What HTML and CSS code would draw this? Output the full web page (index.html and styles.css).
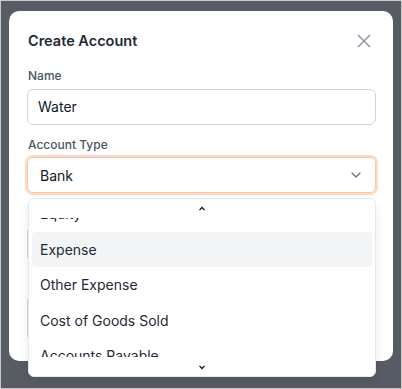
FILE: index.html
```html
<!DOCTYPE html>
<html lang="en">
<head>
  <meta charset="UTF-8">
  <meta name="viewport" content="width=device-width, initial-scale=1.0">
  <title>Create Account</title>
  <link rel="stylesheet" href="styles.css">
</head>
<body>

  <!-- Backdrop -->
  <div class="backdrop">

    <!-- Dialog -->
    <div class="modal">
      <div class="modal-header">
        <h2>Create Account</h2>
        <svg class="close-icon" width="14" height="14" viewBox="0 0 14 14">
          <path d="M1 1 13 13M13 1 1 13" />
        </svg>
      </div>

      <div class="field">
        <label>Name</label>
        <div class="text-input">Water</div>
      </div>

      <div class="field select-field">
        <label>Account Type</label>
        <div class="select open">
          <span>Bank</span>
          <svg class="select-chevron" width="16" height="16" viewBox="0 0 24 24">
            <path d="m6 9 6 6 6-6" />
          </svg>
        </div>

        <!-- Dropdown list -->
        <div class="dropdown">
          <div class="scroll-btn">
            <svg width="12" height="12" viewBox="0 0 24 24"><path d="m7 14 5-5 5 5" /></svg>
          </div>
          <div class="viewport">
            <ul class="options">
              <li>Equity</li>
              <li class="active">Expense</li>
              <li>Other Expense</li>
              <li>Cost of Goods Sold</li>
              <li>Accounts Payable</li>
            </ul>
          </div>
          <div class="scroll-btn">
            <svg width="12" height="12" viewBox="0 0 24 24"><path d="m7 10 5 5 5-5" /></svg>
          </div>
        </div>
      </div>

      <!-- Fields hidden under the open list -->
      <div class="field">
        <span class="label-space"></span>
        <div class="text-input"></div>
      </div>

      <div class="field">
        <span class="label-space"></span>
        <div class="text-input textarea"></div>
      </div>
    </div>

  </div>

</body>
</html>
```

FILE: styles.css
```css
/* General styling */
* {
  box-sizing: border-box;
}

html, body {
  margin: 0;
  height: 100%;
}

body {
  border: 1px solid #c9c9c9;
  font-family: Inter, "Noto Sans", sans-serif;
  color: #111827;
}

/* Backdrop */
.backdrop {
  height: 100%;
  background: #575b63;
  padding-top: 10px;
}

/* Dialog */
.modal {
  width: 384px;
  margin: 0 auto;
  padding: 20px 17px 20px 18px;
  background: #fff;
  border-radius: 10px;
  display: flex;
  flex-direction: column;
  gap: 12px;
}

.modal-header {
  display: flex;
  align-items: center;
  justify-content: space-between;
  margin-bottom: 5px;
  padding-left: 1px;
}

h2 {
  margin: 0;
  font-size: 14.5px;
  line-height: 20px;
  font-weight: 600;
  color: #1f2937;
}

.close-icon {
  margin-right: 5px;
}

.close-icon path {
  stroke: #8f96a3;
  stroke-width: 1.5;
  fill: none;
}

/* Fields */
.field {
  display: flex;
  flex-direction: column;
  gap: 5px;
}

.field label {
  padding-left: 1px;
  font-size: 12px;
  line-height: 16px;
  font-weight: 500;
  color: #4b5563;
}

.label-space {
  height: 16px;
}

.text-input {
  height: 36px;
  padding: 0 10px;
  border: 1px solid #d1d5db;
  border-radius: 6px;
  font-size: 14px;
  line-height: 34px;
  color: #111827;
}

.textarea {
  height: 46px;
}

/* Select */
.select-field {
  position: relative;
  gap: 4px;
}

.select {
  height: 36px;
  padding: 0 11px 0 12px;
  border: 1px solid #fcc7a6;
  border-radius: 6px;
  box-shadow: 0 0 0 2px #fed9c4;
  display: flex;
  align-items: center;
  justify-content: space-between;
  font-size: 14px;
}

.select-chevron path {
  stroke: #6b7280;
  stroke-width: 2;
  fill: none;
  stroke-linecap: round;
  stroke-linejoin: round;
}

/* Dropdown list */
.dropdown {
  position: absolute;
  top: calc(100% + 5px);
  left: 1px;
  right: 0;
  background: #fff;
  border: 1px solid #e5e7eb;
  border-radius: 6px;
  box-shadow: 0 4px 10px rgba(0, 0, 0, 0.08);
  z-index: 10;
}

.scroll-btn {
  height: 19px;
  display: flex;
  align-items: center;
  justify-content: center;
}

.scroll-btn path {
  stroke: #111827;
  stroke-width: 2.5;
  fill: none;
}

.viewport {
  height: 139px;
  overflow: hidden;
  padding: 0 3px;
}

.options {
  list-style: none;
  margin: -22px 0 0;
  padding: 0;
}

.options li {
  height: 35.5px;
  line-height: 35.5px;
  padding-left: 8px;
  border-radius: 4px;
  font-size: 14px;
  color: #1f2937;
}

.options li.active {
  background: #f3f4f6;
}
```
